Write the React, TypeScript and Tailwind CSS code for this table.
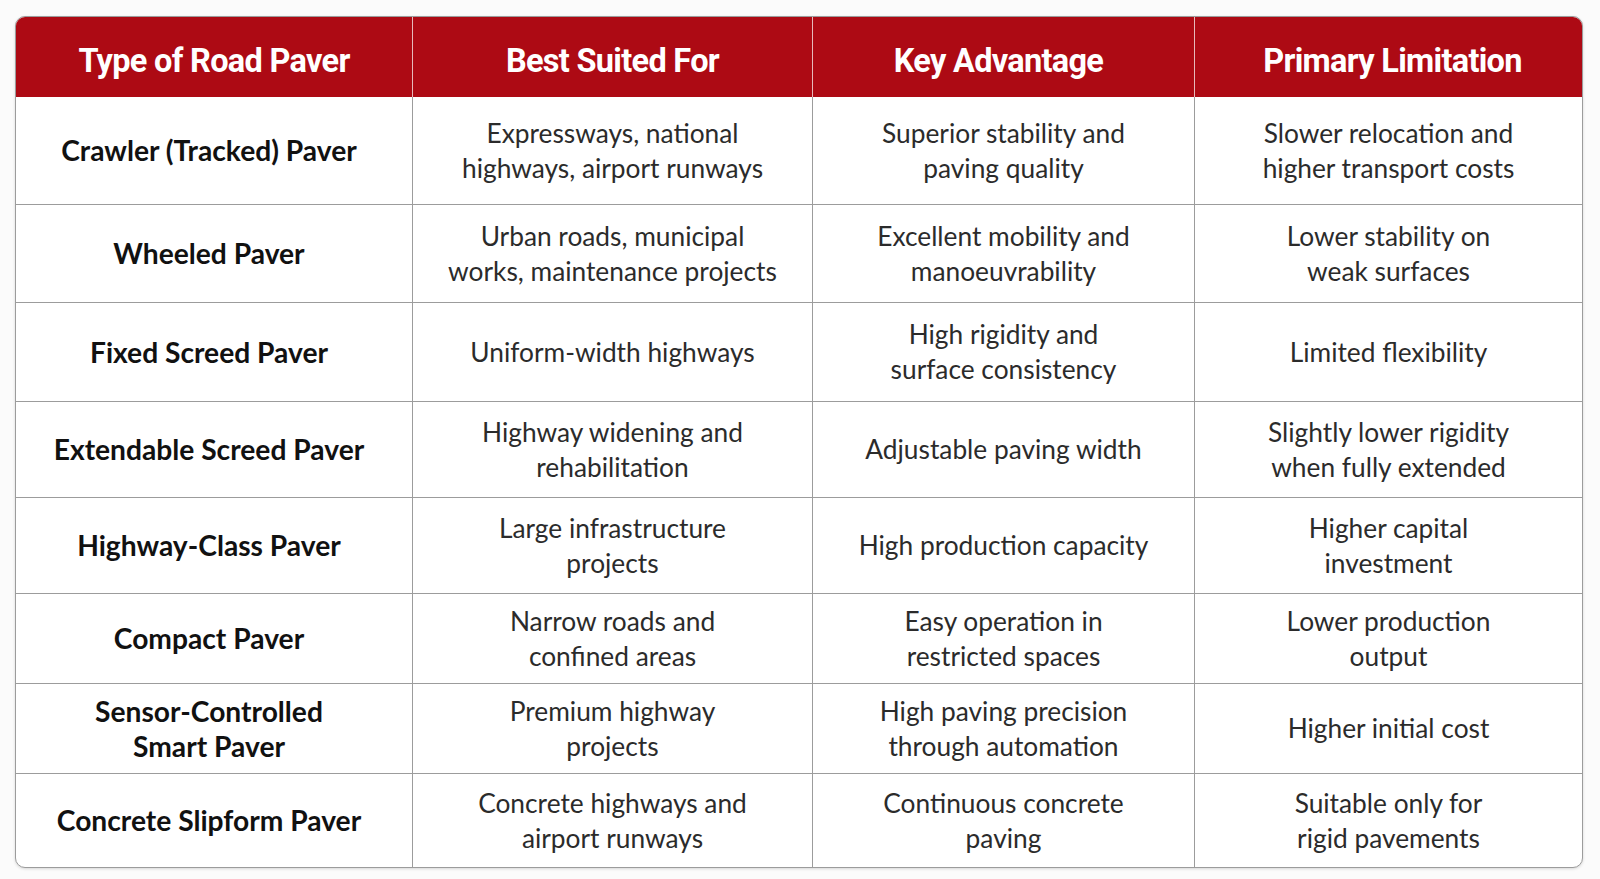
import React from "react";

const rows: { h: number; cells: string[][] }[] = [
  { h: 107, cells: [["Crawler (Tracked) Paver"], ["Expressways, national", "highways, airport runways"], ["Superior stability and", "paving quality"], ["Slower relocation and", "higher transport costs"]] },
  { h: 98, cells: [["Wheeled Paver"], ["Urban roads, municipal", "works, maintenance projects"], ["Excellent mobility and", "manoeuvrability"], ["Lower stability on", "weak surfaces"]] },
  { h: 99, cells: [["Fixed Screed Paver"], ["Uniform-width highways"], ["High rigidity and", "surface consistency"], ["Limited flexibility"]] },
  { h: 96, cells: [["Extendable Screed Paver"], ["Highway widening and", "rehabilitation"], ["Adjustable paving width"], ["Slightly lower rigidity", "when fully extended"]] },
  { h: 96, cells: [["Highway-Class Paver"], ["Large infrastructure", "projects"], ["High production capacity"], ["Higher capital", "investment"]] },
  { h: 90, cells: [["Compact Paver"], ["Narrow roads and", "confined areas"], ["Easy operation in", "restricted spaces"], ["Lower production", "output"]] },
  { h: 90, cells: [["Sensor-Controlled", "Smart Paver"], ["Premium highway", "projects"], ["High paving precision", "through automation"], ["Higher initial cost"]] },
  { h: 94, cells: [["Concrete Slipform Paver"], ["Concrete highways and", "airport runways"], ["Continuous concrete", "paving"], ["Suitable only for", "rigid pavements"]] },
];

const headers = ["Type of Road Paver", "Best Suited For", "Key Advantage", "Primary Limitation"];

export default function App() {
  return (
    <div className="w-[1600px] h-[879px] bg-[#fbfbfb] pt-[16px] pl-[15px]">
      <div className="w-[1568px] rounded-[10px] border border-[#9c9c9c] bg-white overflow-hidden shadow-[0_1px_3px_rgba(0,0,0,0.15)]">
        <div className="grid grid-cols-[397px_400px_382px_387px] h-[80px] bg-[#ad0a14]">
          {headers.map((t, i) => (
            <div
              key={t}
              className={`flex items-center justify-center pt-[8px] text-white font-bold text-[32.5px] tracking-[-0.7px] [font-family:Roboto,sans-serif] ${i < 3 ? "border-r border-[#e7b9bb]" : ""} ${i === 3 ? "pl-[8px]" : ""} ${i === 2 ? "pr-[10px]" : ""}`}
            >
              {t}
            </div>
          ))}
        </div>
        {rows.map((r, ri) => (
          <div
            key={ri}
            className={`grid grid-cols-[397px_400px_382px_387px] ${ri > 0 ? "border-t-[1.5px] border-[#9c9c9c]" : ""}`}
            style={{ height: r.h }}
          >
            {r.cells.map((c, ci) => (
              <div
                key={ci}
                className={`flex flex-col items-center justify-center text-center ${ci < 3 ? "border-r-[1.5px] border-[#9c9c9c]" : ""} ${ci === 0 ? "pr-[10px] font-bold text-[#111] text-[28.2px] leading-[35px] [font-family:Lato,sans-serif]" : "font-normal text-[#2b2b2b] text-[26.3px] leading-[35px] [font-family:Lato,sans-serif]"}`}
              >
                {c.map((l) => (
                  <span key={l}>{l}</span>
                ))}
              </div>
            ))}
          </div>
        ))}
      </div>
    </div>
  );
}
